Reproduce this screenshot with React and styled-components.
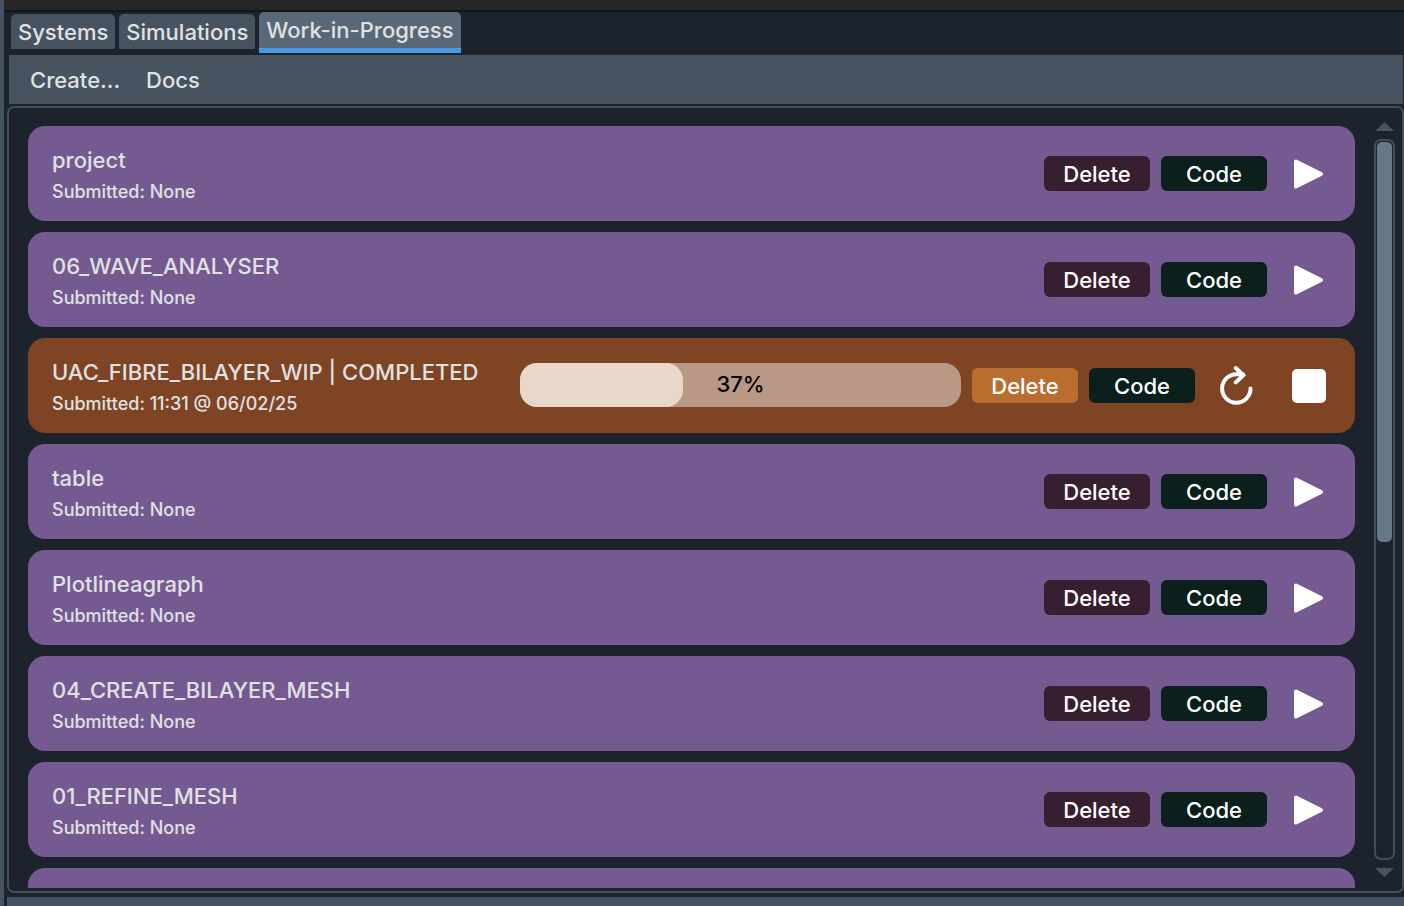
import React, { useRef, useState } from 'react'
import styled, { createGlobalStyle } from 'styled-components'

const GlobalStyle = createGlobalStyle`
  * {
    box-sizing: border-box;
  }
  body {
    margin: 0;
    background: #1c232c;
    color: #e0e1e3;
    font-family: Inter, Roboto, sans-serif;
    font-size: 22px;
    font-weight: 500;
  }
  button {
    font: inherit;
    color: inherit;
    border: 0;
    padding: 0;
    background: none;
    cursor: pointer;
  }
`

const Page = styled.div`
  display: flex;
  flex-direction: column;
  height: 100vh;
  border-left: 4px solid #45525f;
  overflow: hidden;
`

const TitleStrip = styled.div`
  flex: none;
  height: 12px;
  margin-left: -4px;
  background: #262626;
  border-bottom: 2px solid #11161b;
`

const Tabs = styled.div`
  flex: none;
  display: flex;
  align-items: flex-start;
  gap: 4px;
  height: 43px;
  padding-left: 7px;
`

const Tab = styled.button`
  height: ${(p) => (p.$active ? 41 : 35)}px;
  margin-top: ${(p) => (p.$active ? 0 : 2)}px;
  padding: 0 7px;
  line-height: 36px;
  white-space: nowrap;
  border-radius: ${(p) => (p.$active ? '5px 5px 0 0' : '5px 5px 1px 1px')};
  background: ${(p) => (p.$active ? '#586877' : '#475360')};
  ${(p) => p.$active && 'border-bottom: 5px solid #4799e7;'}
`

const Toolbar = styled.nav`
  flex: none;
  display: flex;
  align-items: center;
  gap: 26px;
  height: 49px;
  margin: 0 1px 0 5px;
  padding: 0 21px;
  background: #475360;
`

const Frame = styled.main`
  flex: 1;
  display: flex;
  min-height: 0;
  margin: 2px 0 4px 3px;
  padding: 0 7px 3px 19px;
  border: 2px solid #414d59;
  border-radius: 7px;
`

const JobList = styled.ul`
  flex: 1;
  display: flex;
  flex-direction: column;
  gap: 11px;
  min-width: 0;
  margin: 0;
  padding: 18px 0 0;
  list-style: none;
  overflow-y: auto;
  scrollbar-width: none;
`

const JobRow = styled.li`
  flex: none;
  display: flex;
  align-items: center;
  gap: 11px;
  height: 95px;
  padding: 0 16px 0 24px;
  border-radius: 17px;
  background: ${(p) => (p.$running ? '#7f4423' : '#755991')};
`

const JobInfo = styled.div`
  flex: 1;
  min-width: 0;
  padding-top: 2px;
  white-space: nowrap;
`

const JobName = styled.div`
  line-height: 34px;
`

const JobDate = styled.div`
  font-size: 18px;
  line-height: 30px;
`

const Progress = styled.div`
  flex: 0 1 441px;
  position: relative;
  height: 44px;
  margin-bottom: 2px;
  border-radius: 17px;
  background: #b99985;
  color: #000;
  line-height: 42px;
  text-align: center;
`

const ProgressFill = styled.div`
  height: 100%;
  border-radius: 17px;
  background: #e8d7cb;
`

const ProgressLabel = styled.span`
  position: absolute;
  inset: 0;
`

const ActionButton = styled.button`
  flex: none;
  width: 106px;
  height: 35px;
  border-radius: 6px;
  background: ${(p) => p.$color};
  color: #fff;
`

const IconButton = styled.button`
  flex: none;
  display: flex;
  align-items: center;
  justify-content: center;
  width: 61px;
  height: 44px;
`

const ScrollBar = styled.div`
  flex: none;
  display: flex;
  flex-direction: column;
  align-items: center;
  gap: 8px;
  width: 21px;
  margin: 14px 0 11px 19px;
`

const ScrollArrow = styled.button`
  display: flex;
  flex: none;
`

const ScrollTrack = styled.div`
  flex: 1;
  width: 21px;
  padding: 1px;
  border: 2px solid #414d59;
  border-radius: 7px;
`

const ScrollThumb = styled.div`
  height: 56%;
  border-radius: 5px;
  background: #657888;
`

const Footer = styled.div`
  flex: none;
  height: 9px;
  margin-left: 3px;
  background: #475360;
`

const tabs = ['Systems', 'Simulations', 'Work-in-Progress']

const jobs = [
  { name: 'project', submitted: 'None' },
  { name: '06_WAVE_ANALYSER', submitted: 'None' },
  {
    name: 'UAC_FIBRE_BILAYER_WIP',
    status: 'COMPLETED',
    submitted: '11:31 @ 06/02/25',
    progress: 37,
  },
  { name: 'table', submitted: 'None' },
  { name: 'Plotlineagraph', submitted: 'None' },
  { name: '04_CREATE_BILAYER_MESH', submitted: 'None' },
  { name: '01_REFINE_MESH', submitted: 'None' },
]

const PlayIcon = () => (
  <svg width='32' height='32' viewBox='0 0 32 32' aria-hidden='true'>
    <path
      d='M3 3.5 L28 16 L3 28.5 Z'
      fill='#fff'
      stroke='#fff'
      strokeWidth='4'
      strokeLinejoin='round'
    />
  </svg>
)

const StopIcon = () => (
  <svg width='34' height='34' viewBox='0 0 34 34' aria-hidden='true'>
    <rect width='34' height='34' rx='5' fill='#fff' />
  </svg>
)

const RestartIcon = () => (
  <svg
    width='34'
    height='40'
    viewBox='0 0 34 40'
    fill='none'
    stroke='#fff'
    strokeWidth='4'
    strokeLinecap='round'
    strokeLinejoin='miter'
    aria-hidden='true'
  >
    <path d='M30.5 22.5 A14.2 14.2 0 1 1 16.3 8.3 H23' />
    <path d='M15.8 2 L23.3 9.2 L15.8 16.4' />
  </svg>
)

/* One submitted or pending workflow */
function Job({ job }) {
  const running = job.progress !== undefined

  return (
    <JobRow $running={running}>
      <JobInfo>
        <JobName>{job.status ? `${job.name} | ${job.status}` : job.name}</JobName>
        <JobDate>Submitted: {job.submitted}</JobDate>
      </JobInfo>
      {running && (
        <Progress
          role='progressbar'
          aria-label={job.name}
          aria-valuenow={job.progress}
        >
          <ProgressFill style={{ width: `${job.progress}%` }} />
          <ProgressLabel>{job.progress}%</ProgressLabel>
        </Progress>
      )}
      <ActionButton $color={running ? '#b96e2f' : '#371f30'}>Delete</ActionButton>
      <ActionButton $color='#0b1f1d'>Code</ActionButton>
      {running && (
        <IconButton aria-label='Restart'>
          <RestartIcon />
        </IconButton>
      )}
      <IconButton aria-label={running ? 'Stop' : 'Run'}>
        {running ? <StopIcon /> : <PlayIcon />}
      </IconButton>
    </JobRow>
  )
}

function App() {
  const [tab, setTab] = useState('Work-in-Progress')
  const list = useRef(null)

  const scroll = (top) => list.current.scrollBy({ top, behavior: 'smooth' })

  return (
    <>
      <GlobalStyle />
      <Page>
        <TitleStrip />
        <Tabs role='tablist'>
          {tabs.map((name) => (
            <Tab
              key={name}
              role='tab'
              aria-selected={name === tab}
              $active={name === tab}
              onClick={() => setTab(name)}
            >
              {name}
            </Tab>
          ))}
        </Tabs>
        <Toolbar>
          <button>Create...</button>
          <button>Docs</button>
        </Toolbar>
        <Frame>
          <JobList ref={list}>
            {jobs.map((job) => (
              <Job key={job.name} job={job} />
            ))}
            <JobRow />
          </JobList>
          <ScrollBar>
            <ScrollArrow aria-label='Scroll up' onClick={() => scroll(-106)}>
              <svg width='19' height='9' viewBox='0 0 19 9'>
                <path d='M0 9 L9.5 0 L19 9 Z' fill='#475360' />
              </svg>
            </ScrollArrow>
            <ScrollTrack>
              <ScrollThumb />
            </ScrollTrack>
            <ScrollArrow aria-label='Scroll down' onClick={() => scroll(106)}>
              <svg width='19' height='9' viewBox='0 0 19 9'>
                <path d='M0 0 L9.5 9 L19 0 Z' fill='#475360' />
              </svg>
            </ScrollArrow>
          </ScrollBar>
        </Frame>
        <Footer />
      </Page>
    </>
  )
}

export default App
